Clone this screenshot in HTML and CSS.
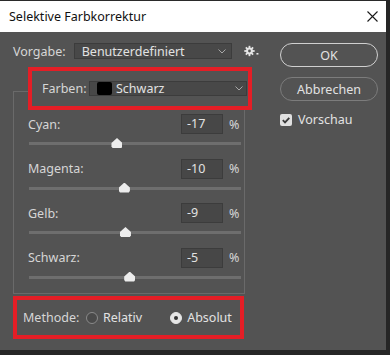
FILE: index.html
```html
<!DOCTYPE html>
<html lang="de">
<head>
<meta charset="utf-8">
<link rel="stylesheet" href="styles.css">
</head>
<body>
<div class="window">
  <div class="titlebar">
    <span class="title">Selektive Farbkorrektur</span>
    <svg class="close" width="11" height="11" viewBox="0 0 11 11"><path d="M0.5 0.5 L10.5 10.5 M10.5 0.5 L0.5 10.5" stroke="#1a1a1a" stroke-width="1.1" fill="none"/></svg>
  </div>
  <div class="content">
    <div class="left">
      <div class="preset-row">
        <span class="preset-label">Vorgabe:</span>
        <div class="select preset-select">
          <span>Benutzerdefiniert</span>
          <svg class="chev" width="8" height="5" viewBox="0 0 8 5"><path d="M0.5 0.5 L4 4 L7.5 0.5" stroke="#a8a8a8" stroke-width="1" fill="none"/></svg>
        </div>
        <svg class="gear" width="16" height="12" viewBox="0 0 16 12">
          <g fill="#e6e6e6">
            <circle cx="5.5" cy="6" r="3.4"/>
            <rect x="4.6" y="0.8" width="1.8" height="10.4"/>
            <rect x="0.3" y="5.1" width="10.4" height="1.8"/>
            <rect x="4.6" y="0.8" width="1.8" height="10.4" transform="rotate(45 5.5 6)"/>
            <rect x="4.6" y="0.8" width="1.8" height="10.4" transform="rotate(-45 5.5 6)"/>
            <rect x="12.5" y="8" width="2" height="1.6"/>
          </g>
          <circle cx="5.5" cy="6" r="1.4" fill="#535353"/>
        </svg>
      </div>
      <div class="group">
        <div class="highlight colors">
          <span class="colors-label">Farben:</span>
          <div class="select colors-select">
            <span class="swatch"></span>
            <span class="colors-name">Schwarz</span>
            <svg class="chev" width="8" height="5" viewBox="0 0 8 5"><path d="M0.5 0.5 L4 4 L7.5 0.5" stroke="#a8a8a8" stroke-width="1" fill="none"/></svg>
          </div>
        </div>
        <div class="slider">
          <div class="slider-head">
            <span class="slider-label">Cyan:</span>
            <span class="num">-17</span>
            <span class="pct">%</span>
          </div>
          <div class="track"><span class="thumb" style="left: 41.5%"></span></div>
        </div>
        <div class="slider">
          <div class="slider-head">
            <span class="slider-label">Magenta:</span>
            <span class="num">-10</span>
            <span class="pct">%</span>
          </div>
          <div class="track"><span class="thumb" style="left: 45%"></span></div>
        </div>
        <div class="slider">
          <div class="slider-head">
            <span class="slider-label">Gelb:</span>
            <span class="num">-9</span>
            <span class="pct">%</span>
          </div>
          <div class="track"><span class="thumb" style="left: 45.5%"></span></div>
        </div>
        <div class="slider">
          <div class="slider-head">
            <span class="slider-label">Schwarz:</span>
            <span class="num">-5</span>
            <span class="pct">%</span>
          </div>
          <div class="track"><span class="thumb" style="left: 47.5%"></span></div>
        </div>
      </div>
      <div class="highlight method">
        <span class="method-label">Methode:</span>
        <span class="radio"></span>
        <span class="radio-text">Relativ</span>
        <span class="radio checked"></span>
        <span class="radio-text">Absolut</span>
      </div>
    </div>
    <div class="right">
      <div class="btn btn-default">OK</div>
      <div class="btn">Abbrechen</div>
      <div class="check-row">
        <span class="checkbox">
          <svg width="12" height="12" viewBox="0 0 12 12"><path d="M2.8 6.2 L5 8.4 L9.3 3.8" stroke="#3a3a3a" stroke-width="1.8" fill="none"/></svg>
        </span>
        <span class="check-text">Vorschau</span>
      </div>
    </div>
  </div>
</div>
</body>
</html>
```
FILE: styles.css
```css
* { box-sizing: border-box; }
html, body { margin: 0; padding: 0; }
body {
  width: 390px;
  height: 355px;
  background: #262626;
  font-family: "Noto Sans", "Open Sans", sans-serif;
  overflow: hidden;
}
.window {
  width: 386px;
  height: 350px;
  background: #535353;
  border-top: 1px solid #2a2a2a;
}
.titlebar {
  height: 31px;
  background: #ffffff;
  display: flex;
  align-items: center;
  justify-content: space-between;
  padding: 0 8px 0 9px;
}
.title {
  font-size: 12.5px;
  color: #111;
}
.content {
  display: flex;
  color: #d6d6d6;
  font-size: 12px;
}
.left {
  width: 260px;
  padding-top: 11px;
}
.preset-row {
  display: flex;
  align-items: center;
  height: 16px;
  padding-left: 13px;
}
.preset-label {
  width: 61px;
  font-size: 12.5px;
}
.select {
  display: flex;
  align-items: center;
  background: #484848;
  border: 1px solid #3c3c3c;
  color: #e2e2e2;
}
.preset-select {
  width: 159px;
  height: 16px;
  padding: 0 5px 0 7px;
  font-size: 12.5px;
  justify-content: space-between;
}
.gear { margin-left: 12px; }
.chev { flex: none; }
.group {
  margin: 32px 0 0 13px;
  width: 232px;
  height: 203px;
  border: 1px solid #6a6a6a;
}
.highlight {
  border: 4px solid #e41e26;
  background: #535353;
  display: flex;
  align-items: center;
}
.colors {
  margin: -25px 0 0 14px;
  width: 224px;
  height: 43px;
  padding: 0 1px 1px 10px;
}
.colors-label {
  width: 47px;
  font-size: 12.5px;
}
.colors-select {
  width: 158px;
  height: 15px;
  padding: 0 3px 0 7px;
  font-size: 12.5px;
}
.swatch {
  width: 15px;
  height: 13px;
  background: #000;
  border-radius: 2px;
  margin-right: 4px;
}
.colors-name { flex: 1; }
.slider {
  height: 44.5px;
  padding-left: 14px;
}
.colors + .slider { margin-top: 4px; }
.slider-head {
  display: flex;
  align-items: center;
  height: 20px;
}
.slider-label { flex: 1; font-size: 12.5px; }
.num {
  width: 42px;
  height: 20px;
  background: #474747;
  border: 1px solid #3c3c3c;
  padding-left: 5px;
  line-height: 18px;
  font-size: 12.5px;
  color: #e2e2e2;
}
.pct {
  width: 21px;
  padding-left: 6px;
  font-size: 12.5px;
}
.track {
  position: relative;
  margin: 8px 0 0 1px;
  width: 212px;
  height: 3px;
  background: #6e6e6e;
}
.thumb {
  position: absolute;
  top: -4px;
  width: 11px;
  height: 10px;
  margin-left: -5.5px;
  background: #ececec;
  clip-path: polygon(50% 0, 100% 50%, 100% 85%, 90% 100%, 10% 100%, 0 85%, 0 50%);
}
.method {
  margin: 2px 0 0 13px;
  width: 231px;
  height: 43px;
  padding: 0 0 0 6px;
}
.method-label { font-size: 12.5px; width: 63px; }
.radio {
  width: 12px;
  height: 12px;
  border-radius: 50%;
  border: 1px solid #8a8a8a;
  background: #4a4a4a;
  margin-right: 5px;
}
.radio.checked {
  background: #e6e6e6;
  border-color: #e6e6e6;
  position: relative;
  margin-left: 28px;
}
.radio.checked::after {
  content: "";
  position: absolute;
  left: 3px;
  top: 3px;
  width: 4px;
  height: 4px;
  border-radius: 50%;
  background: #333;
}
.radio-text { font-size: 12.5px; color: #e2e2e2; }
.right {
  margin-left: 20px;
  padding-top: 11px;
  width: 98px;
}
.btn {
  height: 24px;
  border: 1px solid #7c7c7c;
  border-radius: 12px;
  display: flex;
  align-items: center;
  justify-content: center;
  font-size: 12.5px;
  color: #e2e2e2;
  margin-bottom: 10px;
}
.btn-default { border-color: #d0d0d0; }
.check-row {
  display: flex;
  align-items: center;
  margin-top: 9px;
}
.checkbox {
  width: 12px;
  height: 12px;
  background: #e0e0e0;
  border-radius: 2px;
  display: flex;
}
.check-text {
  margin-left: 6px;
  font-size: 12.5px;
  color: #e2e2e2;
}
```
